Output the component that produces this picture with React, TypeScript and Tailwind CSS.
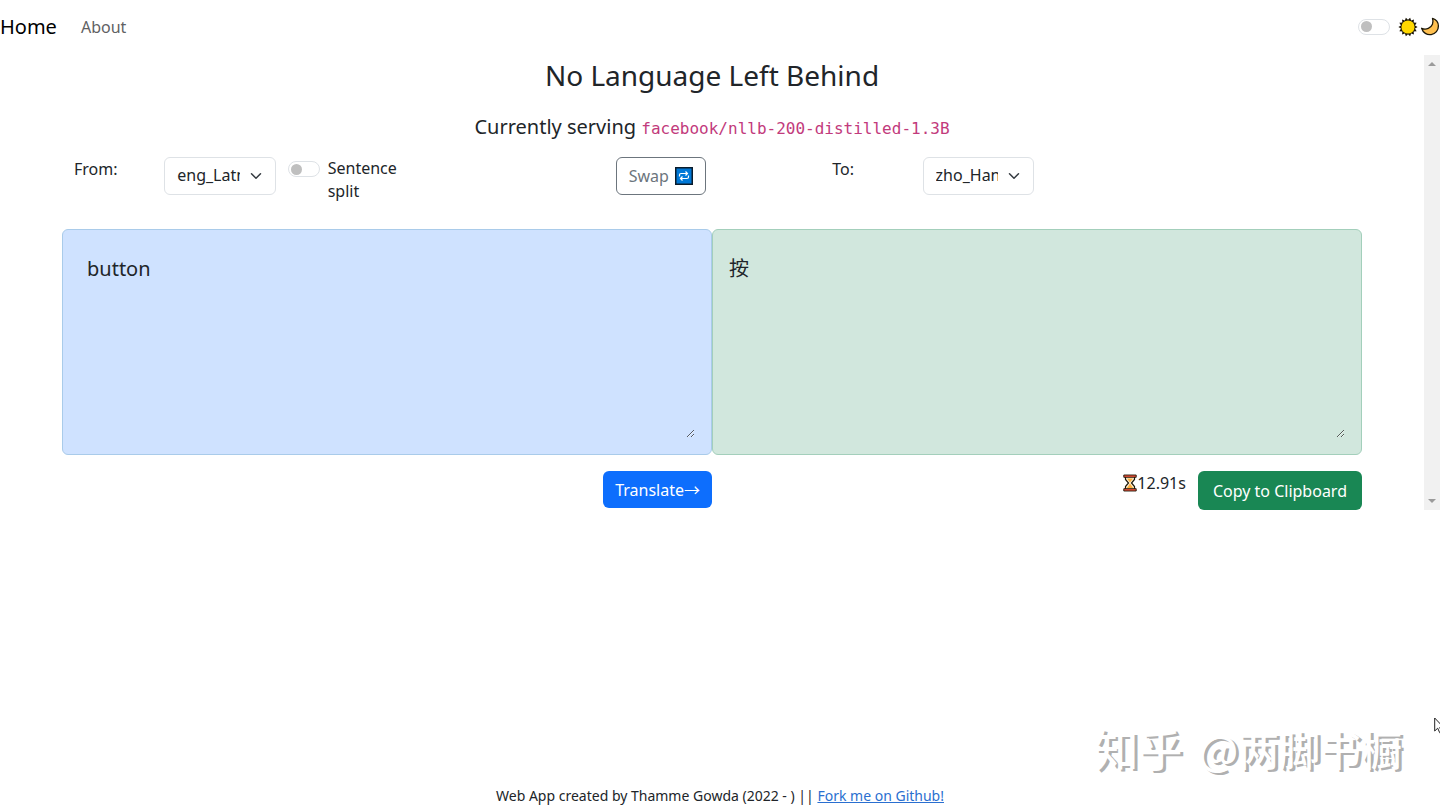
import {ReactNode} from "react";

interface LangSelectProps {
    id: string
    label: string
    value: string
    options: string[]
    children?: ReactNode
}

function Switch({id}: { id: string }) {
    return (
        <input id={id} type="checkbox" role="switch"
               className="appearance-none shrink-0 w-8 h-4 rounded-full border border-[#dee2e6] bg-white flex items-center px-[2px] before:content-[''] before:block before:w-[11px] before:h-[11px] before:rounded-full before:bg-[#bfbfbf] checked:bg-[#0d6efd] checked:justify-end checked:before:bg-white"/>
    );
}

function LangSelect({id, label, value, options, children}: LangSelectProps) {
    return (
        <div className="col-span-5 grid grid-cols-12">
            <label htmlFor={id} className="col-span-2 pl-3">{label}</label>
            <div className="col-span-3 px-3 relative">
                <select id={id} defaultValue={value}
                        className="appearance-none w-full h-[38px] pb-[2px] pl-3 pr-[35px] rounded-md border border-[#dee2e6] bg-white overflow-hidden">
                    {options.map((option) => <option key={option} value={option}>{option}</option>)}
                </select>
                <svg className="absolute right-[26px] top-[13px] w-3 h-3 pointer-events-none" viewBox="0 0 16 16" fill="none"
                     stroke="#343a40" strokeWidth="2" strokeLinecap="round" strokeLinejoin="round">
                    <path d="m2 5 6 6 6-6"/>
                </svg>
            </div>
            {children}
        </div>
    );
}

function SunIcon() {
    const points = Array.from({length: 28}, (_, i) => {
        const r = i % 2 ? 7.2 : 9.6;
        const a = (i * Math.PI) / 14;
        return `${10 + r * Math.cos(a)},${10 + r * Math.sin(a)}`;
    }).join(" ");

    return (
        <svg className="w-5 h-5" viewBox="0 0 20 20">
            <polygon points={points} fill="#1c1708"/>
            <circle cx="10" cy="10" r="6.6" fill="#ffd800"/>
        </svg>
    );
}

function MoonIcon() {
    return (
        <svg className="w-5 h-5" viewBox="0 0 20 20">
            <path d="M12.5 1.4c1.5 4-.2 8.2-4.2 10-2.3 1-4.6.9-6.7-.1 1.4 4.5 5.4 7 9.6 6.3 4.3-.7 7.3-4.3 7.2-8.5-.1-3.8-2.2-6.7-5.9-7.7z"
                  fill="#ffc050" stroke="#1c1708" strokeWidth="1.3" strokeLinejoin="round"/>
        </svg>
    );
}

function RepeatIcon() {
    return (
        <svg className="w-[18px] h-[18px]" viewBox="0 0 18 18" fill="none">
            <rect x=".75" y=".75" width="16.5" height="16.5" fill="#0078d7" stroke="#0a1c2c" strokeWidth="1.5"/>
            <path d="M4.5 9.5V8q0-1.5 1.5-1.5h6.5M10.5 4.5l2 2-2 2M13.5 8.5V10q0 1.5-1.5 1.5H5.5M7.5 9.5l-2 2 2 2"
                  stroke="#fff" strokeWidth="1.2"/>
        </svg>
    );
}

function HourglassIcon() {
    return (
        <svg className="w-[14px] h-[18px]" viewBox="0 0 14 18">
            <path d="M2.5 2v3.5L5.5 9l-3 3.5V16h9v-3.5L8.5 9l3-3.5V2z" fill="#fff3d6" stroke="#1c1708" strokeWidth="1.2"/>
            <path d="M4 4.500h6L7 8.500zM7 9.500l3.500 5h-7z" fill="#fcb040"/>
            <path d="M.8 1h12.4v2.3H.8zM.8 14.7h12.4V17H.8z" fill="#f0503a" stroke="#1c1708" strokeWidth=".9"/>
        </svg>
    );
}

function Scrollbar() {
    return (
        <div className="w-4 shrink-0 bg-[#f1f1f1] flex flex-col justify-between items-center py-[6px]" aria-hidden="true">
            <svg className="w-2 h-[5px]" viewBox="0 0 8 5"><path d="m0 5 4-4 4 4z" fill="#9b9b9b"/></svg>
            <svg className="w-2 h-[5px]" viewBox="0 0 8 5"><path d="m0 0 4 4 4-4z" fill="#9b9b9b"/></svg>
        </div>
    );
}

export default function App() {
    return (
        <div className="min-h-screen flex flex-col bg-white text-[#212529] text-base font-['Noto_Sans','Noto_Sans_CJK_SC',sans-serif] overflow-hidden relative">
            <nav className="h-[55px] pb-[2px] flex items-center justify-between">
                <div className="flex items-center gap-6">
                    <a href="#" className="text-xl text-black">Home</a>
                    <a href="#about" className="text-[#5f6163]">About</a>
                </div>
                <label htmlFor="theme" className="flex items-center">
                    <Switch id="theme"/>
                    <span className="flex gap-[2px] ml-2"><SunIcon/><MoonIcon/></span>
                </label>
            </nav>

            <div className="flex">
                <main className="flex-1 px-[62px]">
                    <h1 className="text-center text-[28px] leading-[40px]">No Language Left Behind</h1>
                    <h2 className="text-center text-xl leading-6 mt-5">
                        Currently serving <code className="text-base leading-6 text-[#c23a7c] font-['DejaVu_Sans_Mono',monospace]">facebook/nllb-200-distilled-1.3B</code>
                    </h2>

                    <div className="grid grid-cols-12 mt-4 leading-6">
                        <LangSelect id="from" label="From:" value="eng_Latn" options={["eng_Latn", "zho_Hans", "fra_Latn"]}>
                            <label htmlFor="split" className="col-span-3 flex gap-2 leading-[23px]">
                                <span className="pt-1"><Switch id="split"/></span>
                                <span>Sentence split</span>
                            </label>
                        </LangSelect>
                        <div className="col-span-2 px-3">
                            <button type="button"
                                    className="h-[38px] px-3 flex items-center gap-[6px] rounded-md border border-[#6c757d] text-[#6c757d]">
                                Swap <RepeatIcon/>
                            </button>
                        </div>
                        <LangSelect id="to" label="To:" value="zho_Hans" options={["zho_Hans", "eng_Latn", "fra_Latn"]}/>
                    </div>

                    <div className="grid grid-cols-2 mt-[26px]">
                        <div className="p-4 rounded-md border border-[#a9cbea] bg-[#cfe2ff]">
                            <textarea aria-label="Source text" defaultValue="button"
                                      className="block w-full h-48 p-2 text-xl leading-[30px] bg-transparent resize"/>
                        </div>
                        <div className="p-4 rounded-md border border-[#a3cfbb] bg-[#d1e7dd]">
                            <textarea aria-label="Translation" defaultValue="按"
                                      className="block w-full h-48 py-2 text-xl leading-[30px] bg-transparent resize"/>
                        </div>
                    </div>

                    <div className="grid grid-cols-2 mt-4">
                        <div className="flex justify-end items-start">
                            <button type="button" className="h-[37px] px-3 rounded-md bg-[#0d6efd] text-white">Translate→</button>
                        </div>
                        <div className="flex justify-end items-start">
                            <span className="flex items-center mr-3 leading-6"><HourglassIcon/>12.91s</span>
                            <button type="button" className="h-[39px] px-[15px] rounded-md bg-[#198754] text-white">Copy to Clipboard</button>
                        </div>
                    </div>
                </main>
                <Scrollbar/>
            </div>

            <footer className="mt-auto text-center text-sm leading-7">
                Web App created by Thamme Gowda (2022 - ) || <a href="#fork" className="text-[#2a6fd0] underline">Fork me on Github!</a>
            </footer>

            <div className="absolute right-[38px] bottom-8 flex items-center gap-4 leading-[60px] font-medium text-white [text-shadow:3px_2px_0_#b0b0b0] pointer-events-none font-['Noto_Sans_CJK_SC',sans-serif]">
                <span className="text-[44px]">知乎</span>
                <span className="text-[41px]">@两脚书橱</span>
            </div>
            <svg className="absolute right-[-6px] bottom-[76px] w-3 h-[17px]" viewBox="0 0 12 17">
                <path d="M.7 1v13l3-2.8 2 4.500 2-.9-2-4.300h4z" fill="#fff" stroke="#222" strokeWidth="1"/>
            </svg>
        </div>
    );
}
